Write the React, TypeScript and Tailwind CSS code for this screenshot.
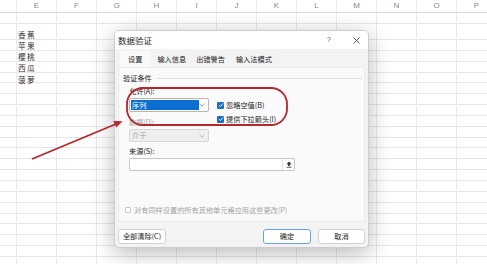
import React from 'react'

const cols = ['', 'E', 'F', 'G', 'H', 'I', 'J', 'K', 'L', 'M', 'N', 'O', 'P']

const fruits = ['香蕉', '苹果', '樱桃', '西瓜', '菠萝']

const rowHeights = ['h-[11px]', 'h-[16px]', ...Array.from({ length: 21 }, () => 'h-[10.85px]')]

function Chevron({ color }: { color: string }) {
  return (
    <svg width="6" height="4" viewBox="0 0 6 4">
      <polyline points="0.5,0.8 3,3.2 5.5,0.8" fill="none" stroke={color} strokeWidth="0.8" />
    </svg>
  )
}

function Check({ label }: { label: string }) {
  return (
    <div className="h-[14px] flex items-center">
      <span className="w-[7px] h-[7px] rounded-[1px] bg-[#1f6fc0] flex items-center justify-center">
        <svg width="6" height="6" viewBox="0 0 6 6">
          <polyline points="1,3.1 2.4,4.5 5,1.5" fill="none" stroke="#fff" strokeWidth="0.9" />
        </svg>
      </span>
      <span className="ml-[2px] text-[7.2px] text-[#222]">{label}</span>
    </div>
  )
}

function Sheet() {
  return (
    <div className="flex flex-col">
      <div className="h-[13px] flex border-b border-[#d9d9d9] bg-white">
        {cols.map((c, i) => (
          <div
            key={i}
            className={`${i === 0 ? 'w-[17px]' : 'w-[40px]'} shrink-0 flex items-center justify-center text-[8px] text-[#8a8a8a] font-['Liberation_Sans',sans-serif] border-r border-[#ececec]`}
          >
            {c}
          </div>
        ))}
      </div>
      {rowHeights.map((h, ri) => (
        <div key={ri} className={`${h} shrink-0 flex border-b border-[#e6e6e6]`}>
          {cols.map((_, i) => (
            <div
              key={i}
              className={`${i === 0 ? 'w-[17px]' : 'w-[40px]'} shrink-0 border-r border-[#e9e9e9] flex items-start`}
            >
              {i === 1 && ri === 1 ? (
                <div className="relative z-10 mt-[4.5px] pl-[1px] text-[7.7px] leading-[11.25px] tracking-[1.4px] text-[#333]">
                  {fruits.map((f, fi) => (
                    <React.Fragment key={f}>
                      {fi > 0 && <br />}
                      {f}
                    </React.Fragment>
                  ))}
                </div>
              ) : null}
            </div>
          ))}
        </div>
      ))}
    </div>
  )
}

function Dialog() {
  return (
    <div className="absolute z-20 left-[114px] top-[30px] w-[255px] h-[218px] flex flex-col rounded-[5px] border border-[#cdcdcd] bg-[#f3f3f3] overflow-hidden shadow-[0_5px_22px_rgba(0,0,0,0.28)]">
      <div className="h-[18px] shrink-0 bg-white flex items-center pl-[3px]">
        <span className="text-[8.5px] text-[#1a1a1a]">数据验证</span>
        <span className="ml-auto w-[12px] text-center text-[7px] text-[#555] font-['Liberation_Sans',sans-serif]">?</span>
        <span className="ml-[15px] mr-[6px] w-[12px] flex justify-center">
          <svg width="7" height="7" viewBox="0 0 7 7">
            <path d="M0.5 0.5 L6.5 6.5 M6.5 0.5 L0.5 6.5" stroke="#333" strokeWidth="0.8" />
          </svg>
        </span>
      </div>

      <div className="flex-1 px-[3px] flex flex-col">
        <div className="h-[18px] shrink-0 flex items-end text-[7.2px] text-[#222]">
          <div className="ml-[2px] h-[16px] px-[8px] flex items-center bg-[#f9f9f9] rounded-t-[2px]">设置</div>
          <div className="ml-[7px] h-[16px] flex items-center">输入信息</div>
          <div className="ml-[10px] h-[16px] flex items-center">出错警告</div>
          <div className="ml-[11px] h-[16px] flex items-center">输入法模式</div>
        </div>

        <div className="h-[155px] shrink-0 bg-[#fafafa] border border-[#ebebeb] rounded-[2px] flex flex-col text-[7.2px] text-[#222]">
          <div className="mt-[4px] h-[12px] flex items-center pl-[4px]">
            <span>验证条件</span>
            <span className="flex-1 h-px bg-[#dedede] ml-[5px] mr-[2px]" />
          </div>

          <div className="pl-[10px] flex flex-col">
            <div className="mt-[2px] h-[10px] flex items-center">允许(A):</div>
            <div className="mt-[2px] flex">
              <div className="w-[80px] flex flex-col">
                <div className="h-[14px] bg-white border border-[#b8b8b8] rounded-[2px] flex items-center pl-[1px] pr-[3px]">
                  <span className="h-[10px] w-[68px] bg-[#0a6fd1] text-white flex items-center pl-[1px]">序列</span>
                  <span className="ml-auto flex items-center">
                    <Chevron color="#777" />
                  </span>
                </div>
                <div className="mt-[5px] h-[10px] flex items-center text-[#a3a3a3]">数据(D):</div>
                <div className="mt-[2px] h-[13px] bg-[#efefef] border border-[#d6d6d6] rounded-[2px] flex items-center pl-[2px] pr-[3px] text-[#9d9d9d]">
                  <span>介于</span>
                  <span className="ml-auto flex items-center">
                    <Chevron color="#aaa" />
                  </span>
                </div>
              </div>
              <div className="ml-[8px] flex flex-col">
                <Check label="忽略空值(B)" />
                <Check label="提供下拉箭头(I)" />
              </div>
            </div>
            <div className="mt-[4px] h-[10px] flex items-center">来源(S):</div>
            <div className="mt-[2px] w-[166px] h-[13px] bg-white border border-[#c6c6c6] rounded-[2px] flex justify-end">
              <div className="w-[12px] border-l border-[#e2e2e2] flex items-center justify-center">
                <svg width="6" height="7" viewBox="0 0 6 7">
                  <polygon points="3,0.4 5.6,3.2 3.9,3.2 3.9,5 2.1,5 2.1,3.2 0.4,3.2" fill="#333" />
                  <rect x="0.6" y="5.8" width="4.8" height="0.8" fill="#333" />
                </svg>
              </div>
            </div>
          </div>

          <div className="mt-[34px] h-[10px] pl-[6px] flex items-center text-[#a3a3a3]">
            <span className="w-[6px] h-[6px] border border-[#cacaca] bg-white rounded-[1px]" />
            <span className="ml-[3px]">对有同样设置的所有其他单元格应用这些更改(P)</span>
          </div>
        </div>

        <div className="mt-[7px] h-[15px] shrink-0 flex text-[7.2px] text-[#222]">
          <div className="w-[48px] bg-white border border-[#d2d2d2] rounded-[3px] flex items-center justify-center">全部清除(C)</div>
          <div className="ml-auto w-[48px] bg-white border border-[#6aa3da] rounded-[3px] flex items-center justify-center">确定</div>
          <div className="ml-[7px] w-[47px] bg-white border border-[#d2d2d2] rounded-[3px] flex items-center justify-center">取消</div>
        </div>
      </div>
    </div>
  )
}

export default function App() {
  return (
    <div className="relative w-[487px] h-[264px] overflow-hidden bg-white font-['Noto_Sans_CJK_SC',sans-serif]">
      <Sheet />
      <Dialog />
      <svg className="absolute z-30 left-0 top-0 pointer-events-none" width="487" height="264" viewBox="0 0 487 264">
        <rect x="127" y="88" width="160" height="37" rx="16" fill="none" stroke="#b5262d" strokeWidth="1.8" />
        <line x1="32" y1="159" x2="116" y2="124" stroke="#b5262d" strokeWidth="1.8" />
        <polygon points="122.5,121.2 116.2,127.6 113.4,121" fill="#b5262d" />
      </svg>
    </div>
  )
}
